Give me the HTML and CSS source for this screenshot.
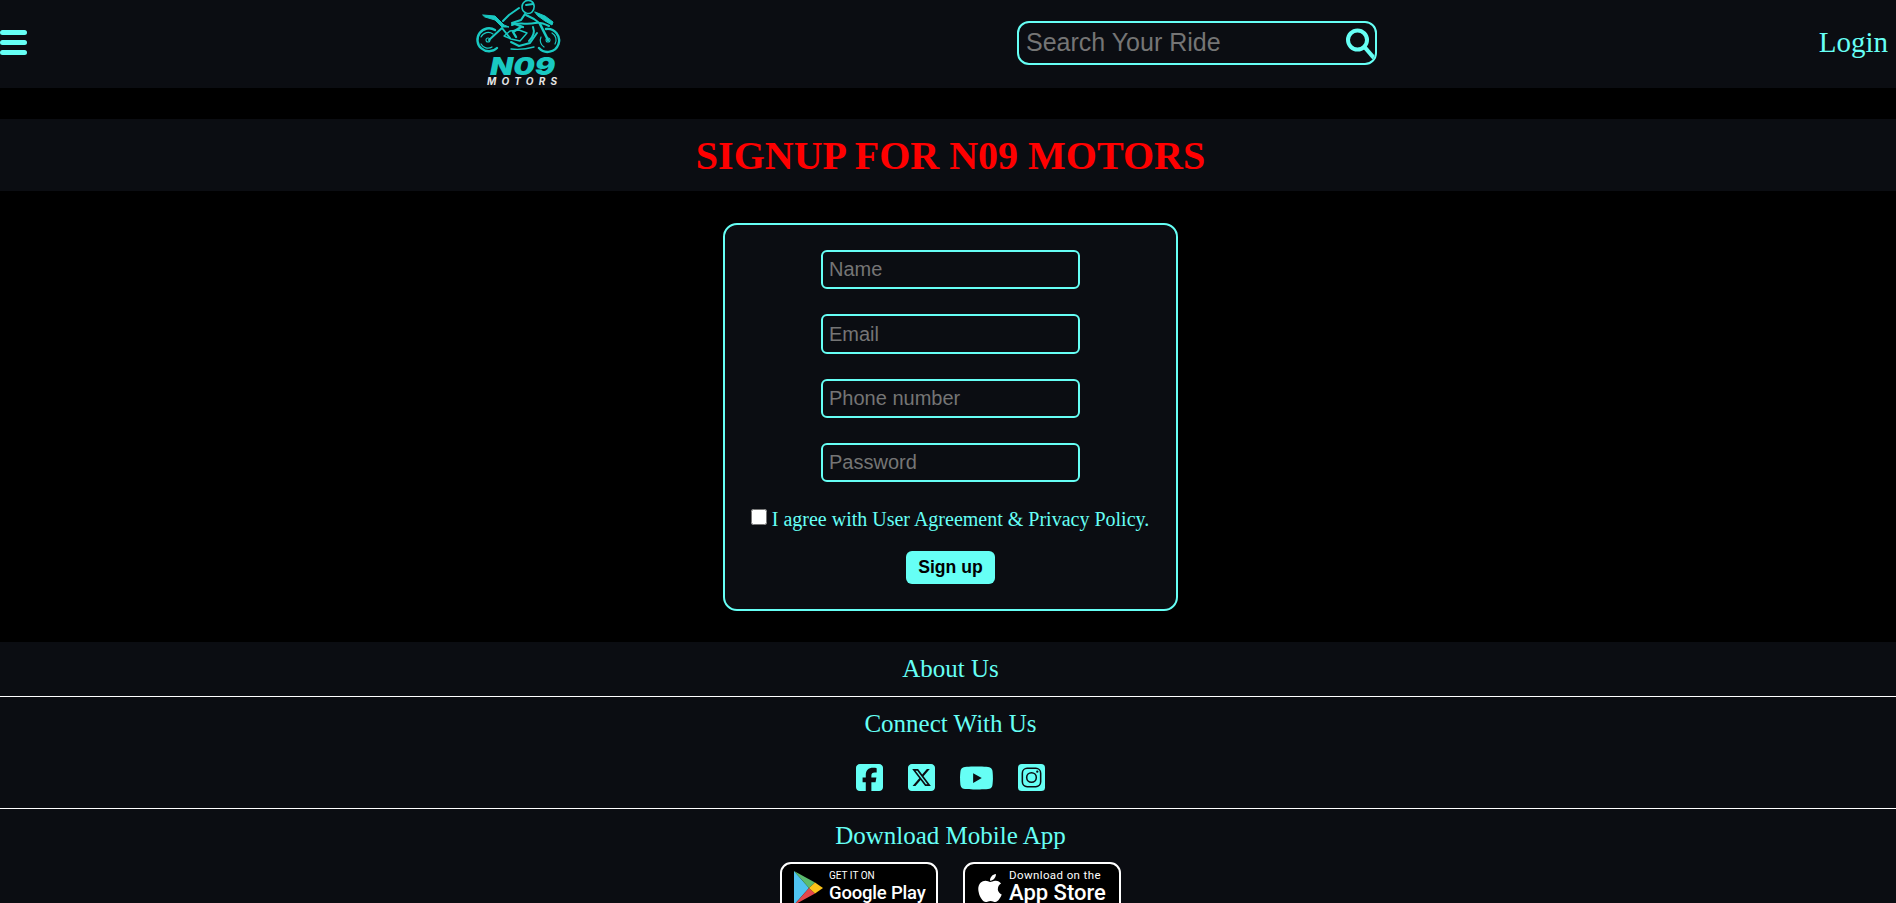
FILE: index.html
```html
<!DOCTYPE html>
<html lang="en">
  <head>
    <meta charset="UTF-8" />
    <title>N09 Motors - Signup</title>
    <link rel="stylesheet" href="styles.css">
  </head>
  <body>
    <header class="topbar">
      <a class="menu-btn" href="#" aria-label="Menu">
        <span></span><span></span><span></span>
      </a>

      <a class="logo" href="#">
        <svg class="logo-img" viewBox="0 0 87 87" width="87" height="87">
          <g fill="none" stroke="#19c9c2" stroke-linecap="round" stroke-linejoin="round">
            <!-- wheels -->
            <path d="M20 30A11.5 11.5 0 1 0 22 48" stroke-width="2.4" />
            <path d="M18 34A8 8 0 0 0 6 37M6 44a8 8 0 0 0 11 3" stroke-width="1.2" />
            <circle cx="13" cy="40" r="2" stroke-width="1.1" />
            <path d="M71 29a11.5 11.5 0 1 1 -7 19" stroke-width="2.4" />
            <path d="M66 37a8 8 0 0 0 3 10M77 33a8 8 0 0 1 3 11" stroke-width="1.2" />
            <circle cx="73" cy="40" r="2" stroke-width="1.1" />
            <!-- tail and frame -->
            <path d="M8 15L20 16L29 25L34 27L27 27L20 20L10 17Z" stroke-width="1" fill="#19c9c2" />
            <path d="M14 40L27 28L35 38" stroke-width="2" />
            <path d="M29 36L35 31L44 30L52 33L45 41L36 39Z" stroke-width="1.4" />
            <path d="M36 42L44 46L55 43L62 33" stroke-width="2" />
            <path d="M36 49C44 50 52 49 59 47" stroke-width="1.4" />
            <!-- tank and fairing -->
            <path d="M37 25C44 22 52 25 60 23C65 22 70 24 74 26" stroke-width="2" />
            <path d="M60 12L70 16L78 22L77 25L70 21L63 16Z" stroke-width="1" fill="#19c9c2" />
            <path d="M65 24L73 40" stroke-width="2.6" />
            <path d="M58 27C60 32 58 37 54 41" stroke-width="2" />
            <!-- rider -->
            <path d="M44 8L34 15L28 21" stroke-width="2" />
            <path d="M50 14L46 20L37 23L48 27" stroke-width="2.2" />
            <path d="M51 15L59 19L63 22" stroke-width="2" />
            <path d="M46 27L38 32L41 37" stroke-width="2.4" />
            <path d="M47 7C47 2 52 -1 56 1C60 3 60 9 57 12C54 15 47 13 47 7Z" stroke-width="1.6" />
            <path d="M51 5L58 4" stroke-width="1.8" />
          </g>
          <text class="logo-big" x="15" y="75" textLength="65" lengthAdjust="spacingAndGlyphs">N09</text>
          <text class="logo-small" x="12" y="85" textLength="70" lengthAdjust="spacing">MOTORS</text>
        </svg>
      </a>

      <form class="search-box">
        <input type="text" placeholder="Search Your Ride" />
        <svg class="search-icon" viewBox="0 0 32 32" width="32" height="32">
          <circle cx="13.5" cy="13" r="9.5" fill="none" stroke="#66fff5" stroke-width="4" />
          <path d="M20.5 20L30 31" stroke="#66fff5" stroke-width="4.2" />
        </svg>
      </form>

      <a class="login-link" href="#">Login</a>
    </header>

    <div class="page-title">
      <h1>SIGNUP FOR N09 MOTORS</h1>
    </div>

    <main class="signup-area">
      <form class="signup-form">
        <input type="text" placeholder="Name" />
        <input class="tall" type="email" placeholder="Email" />
        <input type="text" placeholder="Phone number" />
        <input type="password" placeholder="Password" />
        <label class="agree">
          <input type="checkbox" />
          <span>I agree with User Agreement &amp; Privacy Policy.</span>
        </label>
        <button type="button">Sign up</button>
      </form>
    </main>

    <footer class="site-footer">
      <div class="footer-row about-row">
        <a href="#">About Us</a>
      </div>

      <div class="footer-row connect-row">
        <h3>Connect With Us</h3>
        <div class="social-icons">
          <svg class="icon-fb" viewBox="0 32 448 448"><path d="M64 32C28.7 32 0 60.7 0 96V416c0 35.3 28.7 64 64 64h98.2V334.2H109.4V256h52.8V222.3c0-87.1 39.4-127.5 125-127.5c16.2 0 44.2 3.2 55.7 6.4V172c-6-.6-16.5-1-29.6-1c-42 0-58.2 15.9-58.2 57.2V256h83.6l-14.4 78.2H255V480H384c35.3 0 64-28.7 64-64V96c0-35.3-28.7-64-64-64H64z" /></svg>
          <svg class="icon-x" viewBox="0 32 448 448"><path d="M64 32C28.7 32 0 60.7 0 96V416c0 35.3 28.7 64 64 64H384c35.3 0 64-28.7 64-64V96c0-35.3-28.7-64-64-64H64zm297.1 84L257.3 234.6 379.4 396H283.8L209 298.1 123.3 396H75.8l111-126.9L69.7 116h98l67.7 89.5L313.6 116h47.5zM323.3 367.6L153.4 142.9H125.1L296.9 367.6h26.3z" /></svg>
          <svg class="icon-yt" viewBox="14 64 548 384"><path d="M549.7 124.1c-6.3-23.7-24.8-42.3-48.3-48.6C458.8 64 288 64 288 64S117.2 64 74.6 75.5c-23.5 6.3-42 24.9-48.3 48.6-11.4 42.9-11.4 132.3-11.4 132.3s0 89.4 11.4 132.3c6.3 23.7 24.8 41.5 48.3 47.8C117.2 448 288 448 288 448s170.8 0 213.4-11.5c23.5-6.3 42-24.2 48.3-47.8 11.4-42.9 11.4-132.3 11.4-132.3s0-89.4-11.4-132.3zm-317.5 213.5V175.2l142.7 81.2-142.7 81.2z" /></svg>
          <svg class="icon-ig" viewBox="0 0 28 28">
            <rect width="28" height="28" rx="4" fill="#66fff5" />
            <rect x="4.5" y="4.5" width="19" height="19" rx="5" fill="none" stroke="#0b0d12" stroke-width="1.6" />
            <circle cx="14" cy="14" r="5" fill="none" stroke="#0b0d12" stroke-width="1.6" />
            <circle cx="20" cy="8" r="1.2" fill="#0b0d12" />
          </svg>
        </div>
      </div>

      <div class="footer-row download-row">
        <h3>Download Mobile App</h3>
        <div class="store-badges">
          <a class="badge" href="#">
            <svg class="play-icon" viewBox="0 0 30 36" width="30" height="36">
              <path d="M1 1L16 18L1 35Z" fill="#4fc3f0" />
              <path d="M1 1L22 12.5L16 18Z" fill="#5cbb6e" />
              <path d="M1 35L22 23.5L16 18Z" fill="#e5484d" />
              <path d="M22 12.5L30 18L22 23.5L16 18Z" fill="#fcc419" />
            </svg>
            <span class="badge-text">
              <small>GET IT ON</small>
              <strong>Google Play</strong>
            </span>
          </a>
          <a class="badge apple-badge" href="#">
            <svg class="apple-icon" viewBox="0 0 384 512" width="26" height="32"><path d="M318.7 268.7c-.2-36.7 16.4-64.4 50-84.8-18.8-26.9-47.2-41.7-84.7-44.6-35.5-2.8-74.3 20.7-88.5 20.7-15 0-49.4-19.7-76.4-19.7C63.3 141.2 4 184.8 4 273.5q0 39.3 14.4 81.2c12.8 36.7 59 126.7 107.2 125.2 25.2-.6 43-17.9 75.8-17.9 31.8 0 48.3 17.9 74.9 17.9 48.6-.7 90.4-82.5 102.6-119.3-65.2-30.7-61.7-90-61.7-91.9zm-56.6-164.2c27.3-32.4 24.8-61.9 24-72.5-24.1 1.4-52 16.4-67.9 34.9-17.5 19.8-27.8 44.3-25.6 71.9 26.1 2 49.9-11.4 69.5-34.3z" /></svg>
            <span class="badge-text">
              <small>Download on the</small>
              <strong>App Store</strong>
            </span>
          </a>
        </div>
      </div>
    </footer>
  </body>
</html>
```

FILE: styles.css
```css
html {
  height: 903px;
  overflow: hidden;
}
body {
  margin: 0;
  background-color: #000;
  color: #66fff5;
  font-family: "Liberation Serif", "Times New Roman", serif;
}
a {
  color: #66fff5;
  text-decoration: none;
}

/* top bar */
.topbar {
  display: grid;
  grid-template-columns: 475px 542px 360px 1fr;
  grid-template-rows: 85px;
  align-items: center;
  height: 88px;
  background-color: #0b0d12;
}
.menu-btn {
  display: flex;
  flex-direction: column;
  gap: 5px;
  width: 27px;
}
.menu-btn span {
  height: 5px;
  background-color: #66fff5;
  border-radius: 3px;
}
.logo {
  display: block;
  height: 87px;
  align-self: start;
}
.logo-img {
  display: block;
}
.logo-big {
  fill: #19c9c2;
  font-family: Inter, sans-serif;
  font-size: 24px;
  font-weight: 900;
  font-style: italic;
}
.logo-small {
  fill: #e4e4e4;
  font-family: Inter, sans-serif;
  font-size: 10px;
  font-weight: 700;
  font-style: italic;
}
.search-box {
  display: flex;
  align-items: center;
  height: 44px;
  box-sizing: border-box;
  border: 2px solid #66fff5;
  border-radius: 12px;
  padding-left: 7px;
  overflow: hidden;
}
.search-box input {
  flex: 1;
  min-width: 0;
  padding: 0;
  border: none;
  outline: none;
  background: none;
  font-family: "Liberation Sans", Arial, sans-serif;
  font-size: 25px;
  color: #66fff5;
}
.search-icon {
  flex: none;
  margin-right: -1px;
}
.login-link {
  justify-self: end;
  margin-right: 8px;
  font-size: 29px;
}

/* heading */
.page-title {
  margin-top: 31px;
  padding-left: 5px;
  height: 72px;
  display: flex;
  align-items: center;
  justify-content: center;
  background-color: #0b0d12;
}
.page-title h1 {
  margin: 0;
  color: #f00;
  font-size: 40px;
}

/* form */
.signup-area {
  display: flex;
  justify-content: center;
  padding: 32px 0 31px 5px;
}
.signup-form {
  display: flex;
  flex-direction: column;
  align-items: center;
  box-sizing: border-box;
  width: 455px;
  height: 388px;
  padding-top: 25px;
  background-color: #0b0d12;
  border: 2px solid #66fff5;
  border-radius: 14px;
}
.signup-form > input {
  box-sizing: border-box;
  width: 259px;
  height: 39px;
  margin-bottom: 25px;
  padding: 0 6px;
  background: none;
  border: 2px solid #66fff5;
  border-radius: 6px;
  outline: none;
  font-family: "Liberation Sans", Arial, sans-serif;
  font-size: 20px;
  color: #66fff5;
}
.signup-form > input.tall {
  height: 40px;
}
.agree {
  display: flex;
  align-items: flex-start;
  gap: 5px;
  margin-left: -1px;
  font-size: 20px;
  line-height: 23px;
}
.agree input {
  width: 16px;
  height: 16px;
  margin: 2px 0 0;
}
.agree span {
  padding-top: 1px;
}
.signup-form button {
  width: 89px;
  height: 33px;
  margin-top: 20px;
  padding: 0;
  background-color: #66fff5;
  border: none;
  border-radius: 6px;
  font-family: "Liberation Sans", Arial, sans-serif;
  font-size: 17.6px;
  font-weight: bold;
  color: #000;
}

/* footer */
.site-footer {
  background-color: #0b0d12;
}
.footer-row {
  padding-left: 5px;
  text-align: center;
  font-size: 25px;
}
.footer-row h3 {
  margin: 0;
  font-size: 25px;
  font-weight: normal;
}
.about-row {
  height: 54px;
  line-height: 53px;
  border-bottom: 1px solid #fff;
}
.connect-row {
  height: 112px;
  border-bottom: 1px solid #fff;
  padding-top: 13px;
  box-sizing: border-box;
}
.social-icons {
  display: flex;
  justify-content: center;
  align-items: center;
  gap: 25px;
  margin-top: 26px;
}
.social-icons svg {
  display: block;
  fill: #66fff5;
  width: 27px;
  height: 27px;
}
.social-icons .icon-yt {
  width: 33px;
  height: 24px;
}
.download-row {
  padding-top: 13px;
}
.store-badges {
  display: flex;
  justify-content: center;
  gap: 25px;
  margin-top: 12px;
}
.badge {
  display: flex;
  align-items: center;
  gap: 6px;
  box-sizing: border-box;
  width: 158px;
  height: 52px;
  padding-left: 11px;
  background-color: #000;
  border: 2px solid #fff;
  border-radius: 11px;
  color: #fff;
  font-family: Roboto, sans-serif;
  text-align: left;
}
.apple-badge {
  padding-left: 12px;
}
.badge-text {
  display: flex;
  flex-direction: column;
  margin-top: -1px;
  white-space: nowrap;
}
.badge-text small {
  font-size: 10px;
  line-height: 11px;
}
.apple-badge small {
  font-size: 11.5px;
  letter-spacing: 0.4px;
}
.badge-text strong {
  font-size: 18.5px;
  line-height: 24px;
  font-weight: 500;
  letter-spacing: -0.2px;
}
.apple-badge strong {
  font-size: 22px;
  letter-spacing: 0;
}
.apple-icon {
  fill: #fff;
}
```
